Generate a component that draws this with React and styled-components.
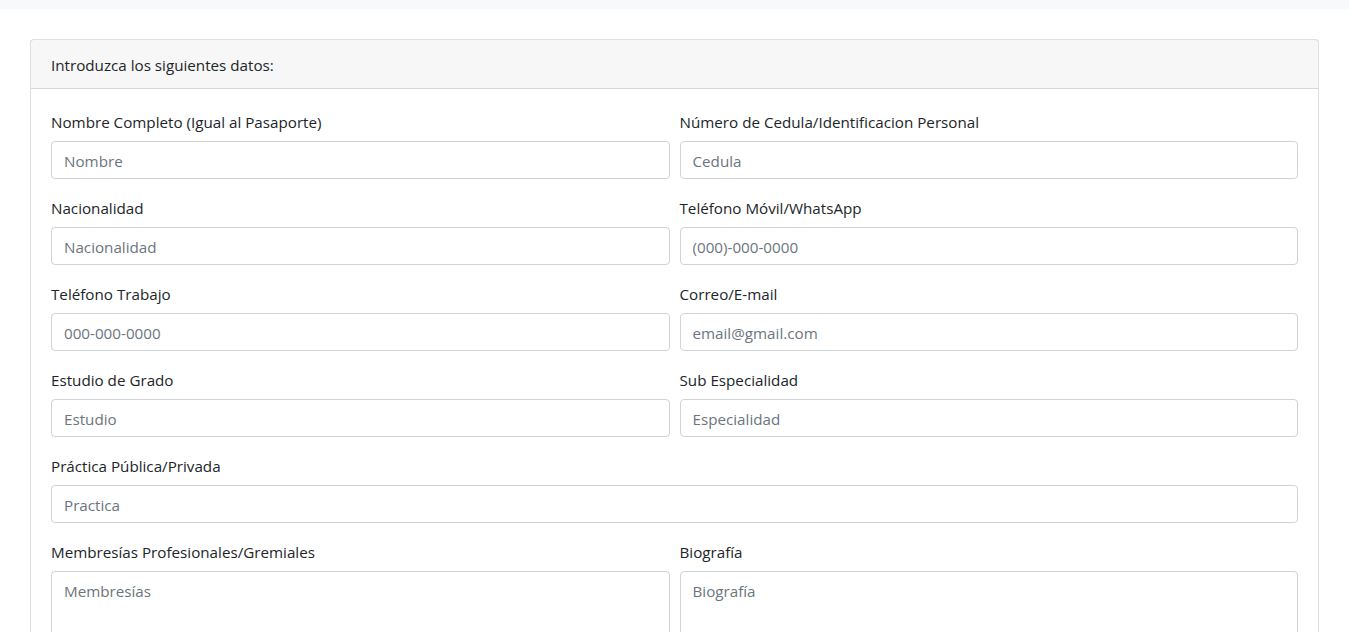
import React from "react";
import styled, { createGlobalStyle } from "styled-components";

const Global = createGlobalStyle`
  * { box-sizing: border-box; }
  html, body { margin: 0; padding: 0; background: #fff; }
  body {
    font-family: "Open Sans", "Noto Sans", "Liberation Sans", sans-serif;
    font-size: 15.2px;
    line-height: 1.5;
    color: #212529;
  }
`;

const TopBar = styled.div`
  height: 9px;
  background: #f8f9fa;
`;

const Page = styled.main`
  padding: 30px 30px 40px;
`;

const Card = styled.section`
  border: 1px solid rgba(0, 0, 0, 0.125);
  border-radius: 4px;
  background: #fff;
`;

const CardHeader = styled.header`
  padding: 13px 20px 11px;
  background: rgba(0, 0, 0, 0.03);
  border-bottom: 1px solid rgba(0, 0, 0, 0.125);
  line-height: 24px;
`;

const CardBody = styled.div`
  padding: 20px;
`;

const Row = styled.div`
  display: grid;
  grid-template-columns: ${(p) => (p.$full ? "1fr" : "1fr 1fr")};
  column-gap: 10px;
`;

const Group = styled.div`
  margin-bottom: 16px;
  display: flex;
  flex-direction: column;
`;

const Label = styled.label`
  line-height: 24px;
  padding-top: 1px;
  margin-bottom: 7px;
`;

const Input = styled.input`
  height: 38px;
  width: 100%;
  padding: 7px 12px 5px;
  font: inherit;
  color: #495057;
  border: 1px solid #ced4da;
  border-radius: 4px;
  background: #fff;
  &::placeholder { color: #6c757d; opacity: 1; }
`;

const TextArea = styled.textarea`
  height: 110px;
  width: 100%;
  padding: 7px 12px 5px;
  font: inherit;
  line-height: 24px;
  color: #495057;
  border: 1px solid #ced4da;
  border-radius: 4px;
  resize: vertical;
  &::placeholder { color: #6c757d; opacity: 1; }
`;

const Field = ({ label, placeholder, area }) => (
  <Group>
    <Label>{label}</Label>
    {area ? <TextArea placeholder={placeholder} /> : <Input placeholder={placeholder} />}
  </Group>
);

export default function App() {
  return (
    <>
      <Global />
      <TopBar />
      <Page>
        <Card>
          <CardHeader>Introduzca los siguientes datos:</CardHeader>
          <CardBody>
            <Row>
              <Field label="Nombre Completo (Igual al Pasaporte)" placeholder="Nombre" />
              <Field label="Número de Cedula/Identificacion Personal" placeholder="Cedula" />
            </Row>
            <Row>
              <Field label="Nacionalidad" placeholder="Nacionalidad" />
              <Field label="Teléfono Móvil/WhatsApp" placeholder="(000)-000-0000" />
            </Row>
            <Row>
              <Field label="Teléfono Trabajo" placeholder="000-000-0000" />
              <Field label="Correo/E-mail" placeholder="email@gmail.com" />
            </Row>
            <Row>
              <Field label="Estudio de Grado" placeholder="Estudio" />
              <Field label="Sub Especialidad" placeholder="Especialidad" />
            </Row>
            <Row $full>
              <Field label="Práctica Pública/Privada" placeholder="Practica" />
            </Row>
            <Row>
              <Field label="Membresías Profesionales/Gremiales" placeholder="Membresías" area />
              <Field label="Biografía" placeholder="Biografía" area />
            </Row>
          </CardBody>
        </Card>
      </Page>
    </>
  );
}
